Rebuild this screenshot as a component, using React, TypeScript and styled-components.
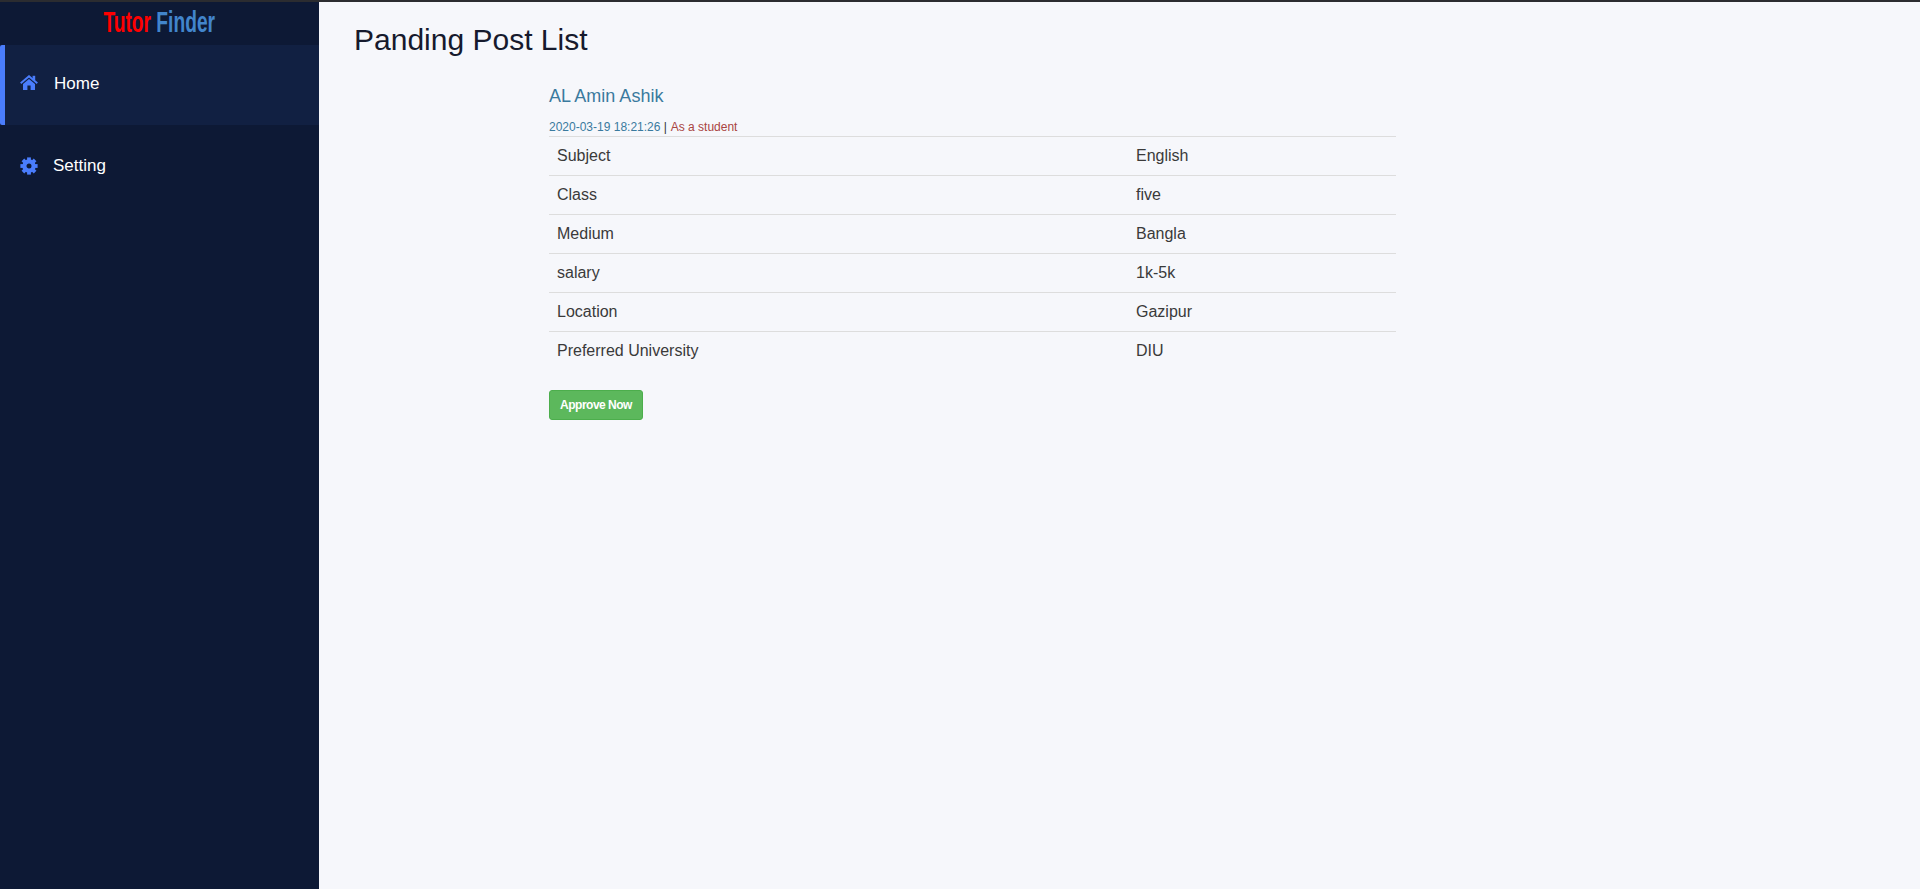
import React from 'react';
import styled, { createGlobalStyle } from 'styled-components';

const rows = [
  ['Subject', 'English'],
  ['Class', 'five'],
  ['Medium', 'Bangla'],
  ['salary', '1k-5k'],
  ['Location', 'Gazipur'],
  ['Preferred University', 'DIU'],
];

const HomeIcon = () => (
  <HomeSvg width="18" height="15" viewBox="0 0 18 15" fill="currentColor">
    <path d="M0.7 8.2 L9 1.2 L17.3 8.2" fill="none" stroke="currentColor" strokeWidth="1.9" />
    <rect x="12.6" y="0.8" width="2.6" height="4.5" />
    <path d="M3 9 L9 4 L15 9 V15 H10.6 V10.6 H7.4 V15 H3 Z" />
  </HomeSvg>
);

const CogIcon = () => (
  <svg width="18" height="18" viewBox="0 0 18 18" fill="currentColor">
    <circle cx="9" cy="9" r="4.6" fill="none" stroke="currentColor" strokeWidth="4.2" />
    {[0, 45, 90, 135, 180, 225, 270, 315].map((angle) => (
      <rect key={angle} x="7.1" y="0.4" width="3.8" height="3.4" transform={`rotate(${angle} 9 9)`} />
    ))}
  </svg>
);

export default function App() {
  return (
    <>
      <GlobalStyle />
      <Page>
        <Sidebar>
          <Logo>
            <LogoWord>
              <Red>Tutor</Red> <Blue>Finder</Blue>
            </LogoWord>
          </Logo>
          <HomeItem>
            <HomeIcon />
            <NavLabel>Home</NavLabel>
          </HomeItem>
          <SettingItem>
            <CogIcon />
            <NavLabel>Setting</NavLabel>
          </SettingItem>
        </Sidebar>
        <Main>
          <Title>Panding Post List</Title>
          <Post>
            <Author>AL Amin Ashik</Author>
            <Meta>
              <Date>2020-03-19 18:21:26</Date> | <Role>As a student</Role>
            </Meta>
            <Table>
              <tbody>
                {rows.map(([label, value]) => (
                  <tr key={label}>
                    <LabelCell>{label}</LabelCell>
                    <Cell>{value}</Cell>
                  </tr>
                ))}
              </tbody>
            </Table>
            <ApproveButton>Approve Now</ApproveButton>
          </Post>
        </Main>
      </Page>
    </>
  );
}

const GlobalStyle = createGlobalStyle`
  html, body {
    margin: 0;
    padding: 0;
    height: 100%;
  }
  body {
    font-family: "Liberation Sans", Arial, sans-serif;
    background: #f6f7fb;
  }
`;

const Page = styled.div`
  display: flex;
  height: 889px;
  overflow: hidden;
  border-top: 2px solid #2b2c30;
  box-sizing: border-box;
`;

const Sidebar = styled.aside`
  flex: 0 0 319px;
  background: #0d1935;
  display: flex;
  flex-direction: column;
`;

const Logo = styled.div`
  height: 43px;
  padding-bottom: 3px;
  box-sizing: border-box;
  display: flex;
  justify-content: center;
  align-items: center;
`;

const LogoWord = styled.div`
  font-family: "Liberation Sans Narrow", "Liberation Sans", sans-serif;
  font-size: 30px;
  font-weight: 700;
  transform: scaleX(0.64);
  white-space: nowrap;
`;

const Red = styled.span`
  color: #ff0000;
`;

const Blue = styled.span`
  color: #4285cc;
`;

const NavItem = styled.div`
  box-sizing: border-box;
  display: flex;
  align-items: center;
  gap: 16px;
  color: #4a7dfc;
`;

const HomeItem = styled(NavItem)`
  height: 80px;
  padding: 0 0 2px 15px;
  background: #112042;
  border-left: 5px solid #4a7dfc;
  border-radius: 2px 0 0 2px;
`;

const HomeSvg = styled.svg`
  margin-top: -3px;
`;

const SettingItem = styled(NavItem)`
  height: 81px;
  padding-left: 20px;
  gap: 15px;
`;

const NavLabel = styled.span`
  color: #fff;
  font-size: 17px;
`;

const Main = styled.main`
  flex: 1;
  padding: 0 35px;
`;

const Title = styled.h1`
  margin: 20px 0 0;
  font-size: 30px;
  font-weight: 400;
  line-height: 36px;
  color: #161a2d;
`;

const Post = styled.section`
  width: 847px;
  margin: 28px 0 0 195px;
`;

const Author = styled.div`
  font-size: 18px;
  line-height: 20px;
  color: #3a7a9e;
`;

const Meta = styled.div`
  margin-top: 13px;
  font-size: 12px;
  line-height: 17px;
  color: #333;
`;

const Date = styled.span`
  color: #3a7a9e;
`;

const Role = styled.span`
  margin-left: 0.5px;
  color: #a94442;
`;

const Table = styled.table`
  width: 100%;
  border-collapse: collapse;
  border-top: 1px solid #ddd;
  margin-bottom: 20px;
  font-size: 16px;
  line-height: 22px;
  color: #3a3a3a;
`;

const Cell = styled.td`
  padding: 8px;
  border-top: 1px solid #ddd;
  tr:first-child & {
    border-top: 0;
  }
`;

const LabelCell = styled(Cell)`
  width: 563px;
`;

const ApproveButton = styled.button`
  display: block;
  width: 94px;
  height: 30px;
  padding: 0;
  font-family: inherit;
  font-size: 12px;
  font-weight: 700;
  letter-spacing: -0.5px;
  color: #fff;
  background: #5cb85c;
  border: 1px solid #4cae4c;
  border-radius: 3px;
`;
